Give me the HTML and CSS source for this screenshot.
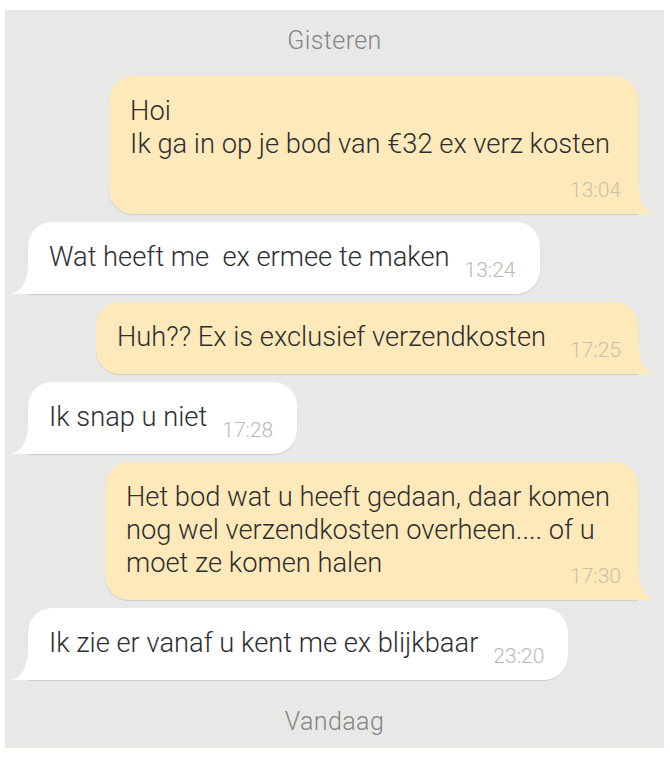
FILE: index.html
```html
<!DOCTYPE html>
<html lang="nl">
<head>
    <meta charset="UTF-8">
    <meta name="viewport" content="width=device-width, initial-scale=1.0">
    <title>Gesprek</title>
    <link rel="stylesheet" href="styles.css">
</head>
<body>
    <div class="chat">
        <div class="day">Gisteren</div>

        <div class="msg out">Hoi<br>Ik ga in op je bod van €32 ex verz kosten<br><span class="gap"></span><span class="time">13:04</span></div>
        <div class="msg in">Wat heeft me&nbsp; ex ermee te maken<span class="gap"></span><span class="time">13:24</span></div>
        <div class="msg out">Huh?? Ex is exclusief verzendkosten<span class="gap"></span><span class="time">17:25</span></div>
        <div class="msg in">Ik snap u niet<span class="gap"></span><span class="time">17:28</span></div>
        <div class="msg out">Het bod wat u heeft gedaan, daar komen<br>nog wel verzendkosten overheen.... of u<br>moet ze komen halen<span class="gap"></span><span class="time">17:30</span></div>
        <div class="msg in">Ik zie er vanaf u kent me ex blijkbaar<span class="gap"></span><span class="time">23:20</span></div>

        <div class="day today">Vandaag</div>
    </div>
</body>
</html>
```

FILE: styles.css
```css
body {
    margin: 0;
    background: #fff;
    font-family: Roboto, 'Liberation Sans', sans-serif;
}
.chat {
    margin: 10px 6px 0 5px;
    height: 738px;
    box-sizing: border-box;
    padding-top: 15px;
    background: #e8e8e6;
    border-top: 1px solid #ece3e3;
    border-bottom: 5px solid #ebe8e4;
    display: flex;
    flex-direction: column;
}
.day {
    text-align: center;
    font-size: 25px;
    font-weight: 300;
    line-height: 30px;
    letter-spacing: 0.4px;
    color: #858585;
    margin-bottom: 20px;
}
.day.today {
    margin: 27px 0 0;
}
.msg {
    position: relative;
    box-sizing: border-box;
    max-width: 570px;
    margin-bottom: 8px;
    padding: 19px 24px 20px 21px;
    border-radius: 24px;
    font-size: 27.3px;
    font-weight: 300;
    line-height: 33px;
    color: #2e2e30;
    box-shadow: 0 1px 1px rgba(0, 0, 0, 0.12);
}
.msg:nth-last-of-type(2) {
    margin-bottom: 0;
}
.msg.in {
    align-self: flex-start;
    margin-left: 23px;
    background: #fff;
    border-bottom-left-radius: 0;
}
.msg.out {
    align-self: flex-end;
    margin-right: 26px;
    padding-right: 28px;
    background: #fde9b9;
    border-bottom-right-radius: 0;
}
/* room kept free at the end of the text for the time */
.gap {
    display: inline-block;
    width: 66px;
}
.out .gap {
    width: 64px;
}
.time {
    position: absolute;
    right: 24px;
    bottom: 12px;
    font-size: 21px;
    font-weight: 300;
    line-height: 24px;
    color: #b9b9b9;
}
.out .time {
    right: 17px;
    color: #c9c1a9;
}

/* bubble tails */
.msg::before,
.msg::after {
    content: "";
    position: absolute;
    bottom: 0;
    height: 30px;
}
.msg.out::before {
    right: -18px;
    width: 19px;
    background: #fde9b9;
}
.msg.out::after {
    right: -20px;
    width: 20px;
    background: #e8e8e6;
    border-bottom-left-radius: 18px 29px;
}
.msg.in::before {
    left: -18px;
    width: 19px;
    background: #fff;
}
.msg.in::after {
    left: -20px;
    width: 20px;
    background: #e8e8e6;
    border-bottom-right-radius: 18px 29px;
}
```
